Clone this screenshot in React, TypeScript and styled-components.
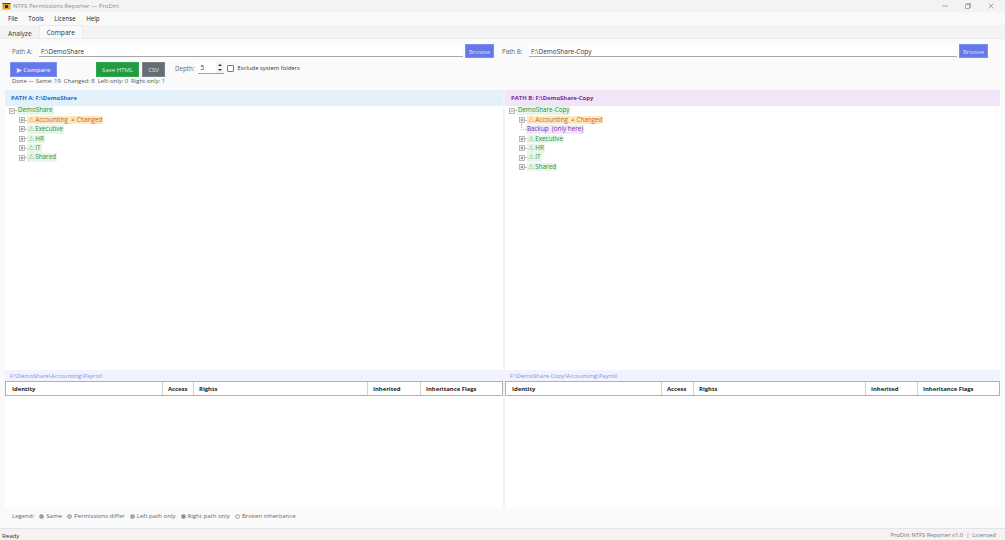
import React from "react";
import styled, { createGlobalStyle } from "styled-components";

const Global = createGlobalStyle`
  html, body { margin: 0; padding: 0; height: 100%; overflow: hidden; }
  body { font-family: "Open Sans", "Noto Sans", sans-serif; font-size: 6.4px; color: #222; }
  #root { height: 100%; }
`;

const Window = styled.div`
  width: 1005px; height: 540px; display: flex; flex-direction: column; background: #f3f3f3;
`;
const TitleBar = styled.div`
  height: 12px; display: flex; align-items: center; padding: 0 0 0 2px; gap: 2px; color: #8b8b8b; font-size: 6.05px;
`;
const TitleText = styled.span`flex: 1;`;
const WinButtons = styled.div`display: flex; align-items: center; gap: 17px; padding-right: 11px; color: #888;`;
const MenuBar = styled.div`
  height: 13px; display: flex; align-items: center; gap: 10.5px; padding-left: 8px; background: #f9f9f9; font-size: 6.2px; color: #222;
`;
const TabStrip = styled.div`
  height: 13px; display: flex; align-items: flex-end; padding-left: 1px; background: #f3f3f3;
`;
const Tab = styled.div<{ $active?: boolean }>`
  height: ${p => (p.$active ? 13 : 11)}px; padding: 0 ${p => (p.$active ? 7 : 6)}px; display: flex; align-items: center;
  font-size: 6.6px; background: ${p => (p.$active ? "#fafafa" : "#f3f3f3")}; color: #333;
  border: 1px solid ${p => (p.$active ? "#eaeaea" : "transparent")}; border-bottom: none; box-sizing: border-box;
`;
const Content = styled.div`
  flex: 1; min-height: 0; display: flex; flex-direction: column; background: #fafafa; border-top: 1px solid #ececec;
  padding: 5px 5px 3px 5px;
`;
const PathRow = styled.div`display: flex; align-items: center; height: 14px;`;
const PathSide = styled.div<{ $w: number }>`
  width: ${p => p.$w}px; display: flex; align-items: center; flex: none;
`;
const PathLabel = styled.span<{ $w: number; $pad: number }>`
  width: ${p => p.$w}px; flex: none; padding: 1px 0 0 ${p => p.$pad}px; box-sizing: border-box; color: #666; font-size: 6.2px;
`;
const PathInput = styled.div`
  flex: 1; height: 12px; display: flex; align-items: center; padding: 1px 0 0 2px; background: #fff;
  border-bottom: 1px solid #a8a8a8; box-sizing: border-box; color: #333; font-size: 6.5px;
`;
const BrowseButton = styled.button`
  width: 29px; height: 14px; margin-left: 2px; padding: 0; border: 1px solid #7d8ff0; background: #6478e8;
  color: #d8ddfa; font: inherit; font-size: 6.1px;
`;
const ActionRow = styled.div`display: flex; align-items: center; height: 15px; margin-top: 4px; padding-left: 5px;`;
const CompareButton = styled.button`
  width: 47px; height: 15px; padding: 0; border: 1px solid #7d8ff0; background: #6478e8; color: #e2e6fc;
  font: inherit; font-size: 6.1px; font-weight: 600;
`;
const SaveButton = styled.button`
  width: 43px; height: 15px; margin-left: 39px; padding: 0; border: 1px solid #2fa84f; background: #239b43; color: #d5f0dc; font: inherit; font-size: 6px;
`;
const CsvButton = styled.button`
  width: 23px; height: 15px; margin-left: 3px; padding: 0; border: 1px solid #7b828a; background: #666d75; color: #e2e4e6; font: inherit; font-size: 6px;
`;
const DepthLabel = styled.span`margin: 0 0 3px 10px; color: #666; font-size: 6.2px;`;
const Spin = styled.div`
  width: 26px; height: 12px; margin: 0 0 3px 4px; display: flex; background: #fff; border-bottom: 1px solid #a0a0a0; box-sizing: border-box;
  padding-left: 2px; align-items: center; color: #333; font-size: 6.4px; justify-content: space-between;
`;
const SpinArrows = styled.svg`width: 8px; height: 11px; display: block;`;
const Check = styled.span`
  width: 5px; height: 5px; margin: 0 0 3px 3px; border: 1px solid #7a7a7a; border-radius: 1px; background: #fff; flex: none;
`;
const CheckLabel = styled.span`margin: 0 0 3px 3px; color: #333; font-size: 5.85px;`;
const Summary = styled.div`
  height: 8px; line-height: 8px; padding-left: 7px; color: #555; font-size: 5.9px; white-space: pre;
`;
const Panes = styled.div`flex: 1; min-height: 0; display: flex; margin-top: 5px;`;
const Pane = styled.div<{ $w: number }>`
  width: ${p => p.$w}px; flex: none; display: flex; flex-direction: column; background: #fff;
`;
const PaneHeader = styled.div<{ $bg: string; $fg: string }>`
  height: 16px; flex: none; display: flex; align-items: center; padding-left: 6px; background: ${p => p.$bg}; color: ${p => p.$fg};
  font-size: 5.9px; font-weight: 700;
`;
const Tree = styled.div`
  height: 264px; box-sizing: border-box; padding: 0 0 0 4px; flex: none; background: #fff;
`;
const Node = styled.div<{ $indent: number }>`
  height: 9.4px; display: flex; align-items: center; padding-left: ${p => p.$indent}px; position: relative;
`;
const Label = styled.span<{ $bg: string; $fg: string }>`
  background: ${p => p.$bg}; color: ${p => p.$fg}; padding: 0 1px; line-height: 8.5px; white-space: pre; font-size: 6.3px;
`;
const WarnGlyph = styled.span`
  font-family: "DejaVu Sans", sans-serif; font-size: 7px; line-height: 6px; opacity: .65; margin-right: 1px;
`;
const Expander = styled.svg`width: 6px; height: 6px; flex: none; display: block;`;
const Connector = styled.span<{ $w: number }>`width: ${p => p.$w}px; height: 0; border-top: 1px dotted #bbb; flex: none;`;
const VerticalGuide = styled.span`
  position: absolute; left: 12px; top: -1px; height: 6px; border-left: 1px dotted #bbb;
`;
const PathCaption = styled.div`
  height: 11px; flex: none; display: flex; align-items: center; padding-left: 5px; background: #f1f4fe; color: #7e8fe8; font-size: 5.85px;
`;
const Grid = styled.div<{ $cols: string }>`
  height: 15px; flex: none; display: grid; grid-template-columns: ${p => p.$cols};
  border: 1px solid #b0b0b0; box-sizing: border-box; background: #fff;
`;
const Cell = styled.div`
  display: flex; align-items: center; padding-left: 5px; font-size: 5.9px; font-weight: 700; color: #222; border-left: 1px solid #d0d0d0;
  white-space: nowrap; &:first-child { border-left: none; padding-left: 6px; }
`;
const GridBody = styled.div`flex: 1; background: #fff;`;
const Legend = styled.div`
  height: 18px; flex: none; display: flex; align-items: center; padding-left: 7px; color: #666; font-size: 6.05px; background: #fafafa;
`;
const LegendItem = styled.span`display: flex; align-items: center; margin-left: 5px; gap: 2px;`;
const Dot = styled.i<{ $c: string }>`
  width: 5px; height: 5px; border-radius: 50%; background: ${p => p.$c}; display: block; border: .5px solid #aaa; box-sizing: border-box;
`;
const StatusBar = styled.div`
  height: 12px; flex: none; display: flex; align-items: center; justify-content: space-between; padding: 1px 9px 0 2px; background: #f3f3f3;
  border-top: 1px solid #e4e4e4; font-size: 6.1px; color: #333; box-sizing: border-box;
`;
const StatusRight = styled.span`color: #777; font-size: 5.8px; white-space: pre;`;

const Ex = ({ open }: { open?: boolean }) => (
  <Expander viewBox="0 0 6 6">
    <rect x=".5" y=".5" width="5" height="5" fill="#fafafa" stroke="#a8a8a8" strokeWidth=".8" />
    <path d={open ? "M1.5 3h3" : "M1.5 3h3M3 1.5v3"} stroke="#666" strokeWidth=".7" />
  </Expander>
);

const green = { $bg: "#e6f7ea", $fg: "#2e8b46" };
const orange = { $bg: "#ffe8bf", $fg: "#c8641e" };
const purple = { $bg: "#f1e6fa", $fg: "#7a2fa8" };

const TreeItem = ({ name, changed }: { name: string; changed?: boolean }) => (
  <Node $indent={10}>
    <Ex />
    <Connector $w={2} />
    <Label {...(changed ? orange : green)}>
      <WarnGlyph>⚠</WarnGlyph>
      {name}
      {changed ? "  ≠ Changed" : ""}
    </Label>
  </Node>
);

const heads = ["Identity", "Access", "Rights", "Inherited", "Inheritance Flags"];

const PaneView = ({ w, letter, path, root, bg, fg, caption, extra, cols }: {
  w: number; letter: string; path: string; root: string; bg: string; fg: string; caption: string; extra?: boolean; cols: string;
}) => (
  <Pane $w={w}>
    <PaneHeader $bg={bg} $fg={fg}>PATH {letter}: {path}</PaneHeader>
    <Tree>
      <Node $indent={0}>
        <Ex open />
        <Connector $w={2} />
        <Label {...green}>{root}</Label>
      </Node>
      <TreeItem name="Accounting" changed />
      {extra && (
        <Node $indent={12}>
          <VerticalGuide />
          <Connector $w={5} />
          <Label {...purple}>Backup  (only here)</Label>
        </Node>
      )}
      {["Executive", "HR", "IT", "Shared"].map(n => <TreeItem key={n} name={n} />)}
    </Tree>
    <PathCaption>{caption}</PathCaption>
    <Grid $cols={cols}>
      {heads.map(h => <Cell key={h}>{h}</Cell>)}
    </Grid>
    <GridBody />
  </Pane>
);

const Divider = styled.div`width: 2px; flex: none; background: #f3f3f3;`;

export default function App() {
  return (
    <Window>
      <Global />
      <TitleBar>
        <svg width="9" height="8" viewBox="0 0 9 8">
          <rect x=".5" y="1" width="8" height="6.5" fill="#d9a520" />
          <rect x="3" y="3" width="3" height="3" fill="#3a2c10" />
          <rect x=".5" y="1" width="8" height="1" fill="#5c4412" />
        </svg>
        <TitleText>NTFS Permissions Reporter — ProDirt</TitleText>
        <WinButtons>
          <svg width="6" height="6" viewBox="0 0 6 6"><path d="M0 3h6" stroke="#999" strokeWidth=".8" /></svg>
          <svg width="6" height="6" viewBox="0 0 6 6"><path d="M.5 1.5h4v4h-4zM1.5 1.5v-1h4v4h-1" fill="none" stroke="#999" strokeWidth=".8" /></svg>
          <svg width="6" height="6" viewBox="0 0 6 6"><path d="M.5.5l5 5M5.5.5l-5 5" stroke="#999" strokeWidth=".8" /></svg>
        </WinButtons>
      </TitleBar>
      <MenuBar>
        <span>File</span><span>Tools</span><span>License</span><span>Help</span>
      </MenuBar>
      <TabStrip>
        <Tab>Analyze</Tab>
        <Tab $active>Compare</Tab>
      </TabStrip>
      <Content>
        <PathRow>
          <PathSide $w={489}>
            <PathLabel $w={34} $pad={7}>Path A:</PathLabel>
            <PathInput>F:\DemoShare</PathInput>
            <BrowseButton>Browse</BrowseButton>
          </PathSide>
          <PathSide $w={494}>
            <PathLabel $w={35} $pad={8}>Path B:</PathLabel>
            <PathInput>F:\DemoShare-Copy</PathInput>
            <BrowseButton>Browse</BrowseButton>
          </PathSide>
        </PathRow>
        <ActionRow>
          <CompareButton>▶ Compare</CompareButton>
          <SaveButton>Save HTML</SaveButton>
          <CsvButton>CSV</CsvButton>
          <DepthLabel>Depth:</DepthLabel>
          <Spin>
            5
            <SpinArrows viewBox="0 0 8 11">
              <rect x="0" y="0" width="8" height="11" fill="#f4f4f4" />
              <path d="M2 4 4 2l2 2zM2 7l2 2 2-2z" fill="#333" />
            </SpinArrows>
          </Spin>
          <Check />
          <CheckLabel>Exclude system folders</CheckLabel>
        </ActionRow>
        <Summary>Done — Same: 19  Changed: 8  Left-only: 0  Right-only: 1</Summary>
        <Panes>
          <PaneView w={498} cols="156px 31px 174px 53px 1fr" letter="A" path="F:\DemoShare" root="DemoShare" bg="#e3f1fc" fg="#1e66c8" caption="F:\DemoShare\Accounting\Payroll" />
          <Divider />
          <PaneView w={495} cols="155px 32px 172px 52px 1fr" letter="B" path="F:\DemoShare-Copy" root="DemoShare-Copy" bg="#f3e5f8" fg="#7a1fa2" caption="F:\DemoShare-Copy\Accounting\Payroll" extra />
        </Panes>
        <Legend>
          Legend:
          <LegendItem><Dot $c="#9a9a9a" />Same</LegendItem>
          <LegendItem><Dot $c="#c4c4c4" />Permissions differ</LegendItem>
          <LegendItem><Dot $c="#a8a8a8" />Left path only</LegendItem>
          <LegendItem><Dot $c="#888" />Right path only</LegendItem>
          <LegendItem><Dot $c="#eee" />Broken inheritance</LegendItem>
        </Legend>
      </Content>
      <StatusBar>
        <span>Ready</span>
        <StatusRight>ProDirt NTFS Reporter v1.0  |  Licensed</StatusRight>
      </StatusBar>
    </Window>
  );
}
